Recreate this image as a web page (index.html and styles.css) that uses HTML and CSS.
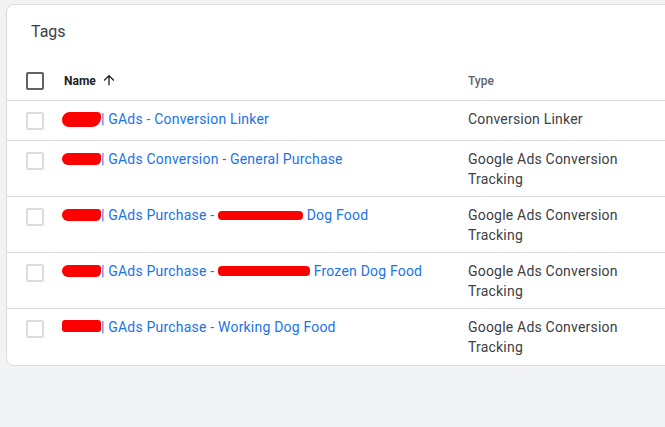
FILE: index.html
```html
<!DOCTYPE html>
<html>
<head>
<meta charset="utf-8">
<link rel="stylesheet" href="styles.css">
</head>
<body>
<div class="card">
  <div class="title">Tags</div>
  <div class="row head">
    <div class="cell-check"><span class="box box-dark"></span></div>
    <div class="cell-name hname">Name
      <svg class="sort" viewBox="0 0 24 24" width="16" height="16"><path d="M4 12l1.41 1.41L11 7.830V20h2V7.83l5.58 5.59L20 12l-8-8-8 8z" fill="#202124"/></svg>
    </div>
    <div class="cell-type htype">Type</div>
  </div>
  <div class="row">
    <div class="cell-check"><span class="box"></span></div>
    <div class="cell-name"><span class="redact r-a"></span><a class="link">| GAds - Conversion Linker</a></div>
    <div class="cell-type">Conversion Linker</div>
  </div>
  <div class="row">
    <div class="cell-check"><span class="box"></span></div>
    <div class="cell-name"><span class="redact r-b"></span><a class="link">| GAds Conversion - General Purchase</a></div>
    <div class="cell-type">Google Ads Conversion Tracking</div>
  </div>
  <div class="row">
    <div class="cell-check"><span class="box"></span></div>
    <div class="cell-name"><span class="redact r-b"></span><a class="link">| GAds Purchase - <span class="redact r-c"></span> Dog Food</a></div>
    <div class="cell-type">Google Ads Conversion Tracking</div>
  </div>
  <div class="row">
    <div class="cell-check"><span class="box"></span></div>
    <div class="cell-name"><span class="redact r-b"></span><a class="link">| GAds Purchase - <span class="redact r-d"></span> Frozen Dog Food</a></div>
    <div class="cell-type">Google Ads Conversion Tracking</div>
  </div>
  <div class="row last">
    <div class="cell-check"><span class="box"></span></div>
    <div class="cell-name"><span class="redact r-e"></span><a class="link">| GAds Purchase - Working Dog Food</a></div>
    <div class="cell-type">Google Ads Conversion Tracking</div>
  </div>
</div>
</body>
</html>
```
FILE: styles.css
```css
html, body {
  margin: 0;
  padding: 0;
  background: #f1f3f4;
  overflow: hidden;
  width: 665px;
  height: 427px;
}
body {
  padding: 4px 0 0 6px;
  box-sizing: border-box;
  font-family: Roboto, "Liberation Sans", Arial, sans-serif;
}
.card {
  width: 720px;
  background: #fff;
  border: 1px solid #dadce0;
  border-radius: 8px;
  padding-bottom: 1px;
}
.title {
  height: 56px;
  box-sizing: border-box;
  padding: 15px 0 0 24px;
  font-size: 16px;
  line-height: 24px;
  color: #3c4043;
}
.row {
  display: grid;
  grid-template-columns: 57px 404px 170px 1fr;
  align-items: start;
  box-sizing: border-box;
  min-height: 40px;
  padding: 8px 0 7px;
  border-bottom: 1px solid #dadce0;
  font-size: 14px;
  line-height: 20px;
  letter-spacing: 0.2px;
  color: #3c4043;
}
.row.last { border-bottom: none; }
.row.head {
  height: 40px;
  padding: 0;
  align-items: center;
  font-size: 12px;
  line-height: 16px;
  letter-spacing: 0;
}
.cell-check {
  padding-left: 19px;
  display: flex;
}
.row .cell-check { padding-top: 3px; }
.row.head .cell-check { padding-top: 0; }
.box {
  display: block;
  width: 18px;
  height: 18px;
  box-sizing: border-box;
  border: 2px solid #dadce0;
  border-radius: 2px;
}
.box-dark { border-color: #5f6368; }
.hname {
  display: flex;
  align-items: center;
  font-weight: 700;
  color: #202124;
}
.sort { margin-left: 5px; margin-top: -1px; }
.htype {
  font-weight: 500;
  color: #5f6368;
}
.link {
  color: #1a73e8;
  text-decoration: none;
}
.redact {
  display: inline-block;
  background: #ff0000;
  vertical-align: middle;
}
.r-a, .r-b, .r-e { margin-left: -2px; width: 39px; }
.r-a { height: 15px; border-radius: 8px 4px 9px 7px; margin-top: -2px; }
.r-b { height: 12px; border-radius: 7px 4px 6px 7px; margin-top: -3px; }
.r-e { height: 12px; border-radius: 3px; margin-top: -4px; }
.r-c { width: 85px; height: 9px; border-radius: 4px; margin-top: -2px; }
.r-d { width: 92px; height: 10px; border-radius: 4px; margin-top: -2px; }
```
